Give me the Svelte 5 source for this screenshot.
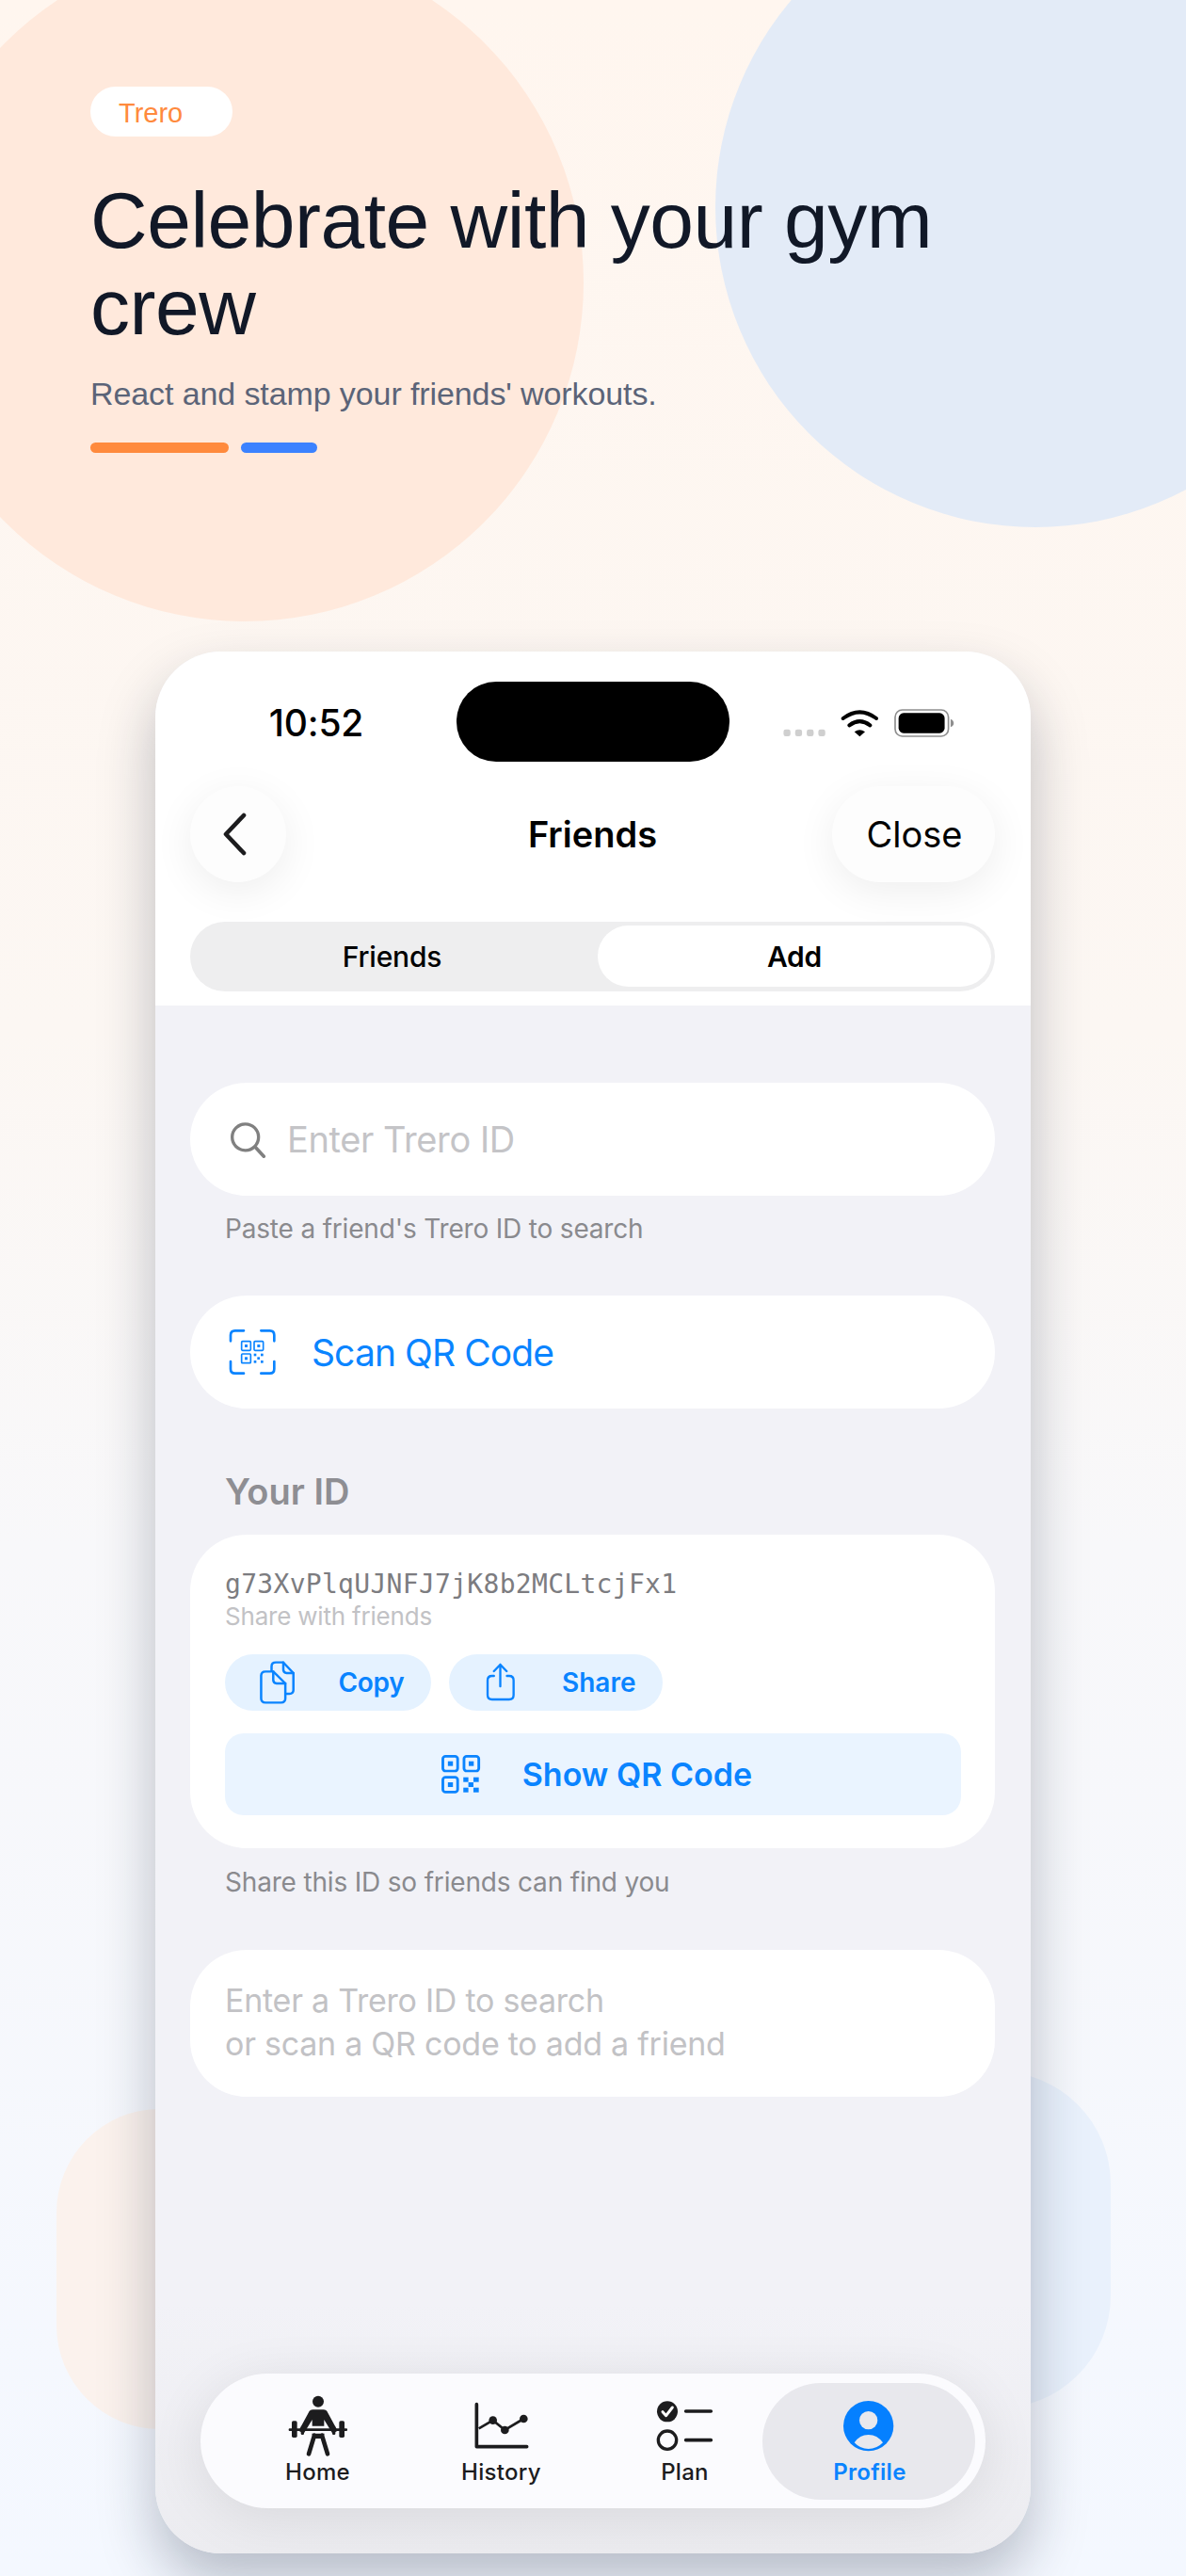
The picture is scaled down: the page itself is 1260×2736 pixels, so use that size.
<script>
  const tabs = ['Home', 'History', 'Plan', 'Profile'];
</script>

<div class="page">
  <div class="blob orange-circle"></div>
  <div class="blob blue-circle"></div>
  <div class="blob orange-box"></div>
  <div class="blob blue-box"></div>

  <section class="hero">
    <div class="badge">Trero</div>
    <h1>Celebrate with your gym crew</h1>
    <p>React and stamp your friends' workouts.</p>
    <div class="bars"><span class="bar-o"></span><span class="bar-b"></span></div>
  </section>

  <div class="phone">
    <header class="top">
      <div class="status">
        <div class="time">10:52</div>
        <div class="island"></div>
        <div class="sys">
          <svg class="sys-svg" viewBox="150 150 560 100" width="186.7" height="33.3" aria-hidden="true">
            <rect x="157" y="221" width="22" height="22" rx="7" fill="#cfcfcf"/>
            <rect x="194" y="221" width="22" height="22" rx="7" fill="#cfcfcf"/>
            <rect x="231" y="221" width="22" height="22" rx="7" fill="#cfcfcf"/>
            <rect x="268" y="221" width="22" height="22" rx="7" fill="#cfcfcf"/>
            <path d="M347 186 Q400 146 453 186" fill="none" stroke="#000" stroke-width="12" stroke-linecap="round"/>
            <path d="M367 208 Q400 183 433 208" fill="none" stroke="#000" stroke-width="12" stroke-linecap="round"/>
            <path d="M383 229 L400 244 L417 229 Q400 216 383 229Z" fill="#000"/>
            <rect x="513" y="159" width="170" height="84" rx="23" fill="none" stroke="#8e8e8e" stroke-width="5"/>
            <rect x="524" y="169" width="147" height="64" rx="16" fill="#000"/>
            <path d="M690 188 Q700 192 700 201 Q700 210 690 214Z" fill="#8e8e8e"/>
          </svg>
        </div>
      </div>
      <nav class="nav">
        <button class="round back" aria-label="Back">
          <svg viewBox="0 0 30 48" width="30" height="48" aria-hidden="true"><polyline points="25,4 6,24 25,44" fill="none" stroke="#1c1c1e" stroke-width="4.6" stroke-linecap="round" stroke-linejoin="round"/></svg>
        </button>
        <div class="title">Friends</div>
        <button class="round close">Close</button>
      </nav>
      <div class="seg">
        <div class="seg-item left">Friends</div>
        <div class="seg-item on">Add</div>
      </div>
    </header>

    <main class="content">
      <div class="pill-row">
        <svg class="search" viewBox="155 178 120 122" width="40" height="41" aria-hidden="true"><circle cx="208" cy="231" r="42" fill="none" stroke="#808080" stroke-width="10"/><line x1="240" y1="263" x2="267" y2="292" stroke="#808080" stroke-width="11" stroke-linecap="round"/></svg>
        <span class="placeholder">Enter Trero ID</span>
      </div>
      <div class="hint">Paste a friend's Trero ID to search</div>

      <div class="pill-row scan">
        <svg class="scan-ic" viewBox="155 845 150 150" width="50" height="50" aria-hidden="true">
          <g fill="none" stroke="#0a84ff" stroke-width="8" stroke-linecap="round">
            <path d="M161 885 V866 Q161 852 175 852 H203"/>
            <path d="M258 852 H286 Q300 852 300 866 V885"/>
            <path d="M161 950 V974 Q161 988 175 988 H203"/>
            <path d="M258 988 H286 Q300 988 300 974 V950"/>
            <g stroke-width="5">
              <rect x="196" y="886" width="29" height="29" rx="3"/>
              <rect x="236" y="886" width="29" height="29" rx="3"/>
              <rect x="196" y="926" width="29" height="29" rx="3"/>
            </g>
          </g>
          <g fill="#0a84ff">
            <rect x="206" y="896" width="9" height="9"/><rect x="246" y="896" width="9" height="9"/><rect x="206" y="936" width="9" height="9"/>
            <rect x="235" y="925" width="8" height="8"/><rect x="257" y="925" width="8" height="8"/><rect x="246" y="936" width="8" height="8"/><rect x="235" y="947" width="8" height="8"/><rect x="257" y="947" width="8" height="8"/>
          </g>
        </svg>
        <span class="scan-text">Scan QR Code</span>
      </div>

      <div class="your-id">Your ID</div>

      <section class="card">
        <div class="id">g73XvPlqUJNFJ7jK8b2MCLtcjFx1</div>
        <div class="share-note">Share with friends</div>
        <div class="actions">
          <button class="action copy">
            <svg viewBox="240 464 105 136" width="37.5" height="45.3" preserveAspectRatio="none" aria-hidden="true">
              <g fill="none" stroke="#0a84ff" stroke-width="7" stroke-linejoin="round" stroke-linecap="round">
                <path d="M275 495 V482 Q275 469 288 469 H310 L340 503 V557 Q340 569 328 569 H318"/>
                <path d="M310 469 V492 Q310 503 320 503 H340"/>
                <path d="M244 512 Q244 498 257 498 H280 L316 536 V584 Q316 597 303 597 H257 Q244 597 244 584Z"/>
                <path d="M280 498 V525 Q280 536 290 536 H316"/>
              </g>
            </svg>
            <span>Copy</span>
          </button>
          <button class="action share">
            <svg viewBox="910 475 95 125" width="32" height="41.7" preserveAspectRatio="none" aria-hidden="true">
              <g fill="none" stroke="#0a84ff" stroke-width="7" stroke-linejoin="round" stroke-linecap="round">
                <path d="M936 517 H930 Q916 517 916 531 V578 Q916 592 930 592 H984 Q998 592 998 578 V531 Q998 517 984 517 H977"/>
                <path d="M956 550 V481 M936 502 L956 481 L976 502"/>
              </g>
            </svg>
            <span>Share</span>
          </button>
        </div>
        <button class="show-qr">
          <svg viewBox="778 760 120 128" width="42.8" height="42.7" preserveAspectRatio="none" aria-hidden="true">
            <g fill="none" stroke="#0a84ff" stroke-width="8">
              <rect x="785" y="767" width="44" height="47" rx="8"/><rect x="848" y="767" width="44" height="47" rx="8"/><rect x="785" y="834" width="44" height="47" rx="8"/>
            </g>
            <g fill="#0a84ff">
              <rect x="800" y="783" width="15" height="15"/><rect x="862" y="783" width="15" height="15"/><rect x="800" y="850" width="15" height="15"/>
              <rect x="846" y="834" width="15" height="15"/><rect x="876" y="834" width="16" height="15"/><rect x="861" y="850" width="15" height="15"/><rect x="846" y="867" width="15" height="15"/><rect x="876" y="867" width="16" height="15"/>
            </g>
          </svg>
          <span>Show QR Code</span>
        </button>
      </section>

      <div class="hint after-card">Share this ID so friends can find you</div>

      <section class="empty">Enter a Trero ID to search<br />or scan a QR code to add a friend</section>
    </main>

    <footer class="tabbar">
      {#each tabs as t}
        <div class="tab" class:active={t === 'Profile'}>
          <div class="slot">
            {#if t === 'Home'}
              <svg viewBox="310 130 204 198" width="68" height="66" aria-hidden="true">
                <g fill="#1c1c1e">
                  <circle cx="412" cy="150" r="18"/>
                  <path d="M395 176 H429 Q438 176 443 186 L474 243 L458 252 L431 208 V228 H393 V208 L366 252 L350 243 L381 186 Q386 176 395 176Z"/>
                  <rect x="318" y="236" width="187" height="8" rx="3"/>
                  <rect x="328" y="212" width="17" height="53" rx="5"/>
                  <rect x="357" y="228" width="10" height="28" rx="4"/>
                  <rect x="457" y="228" width="10" height="28" rx="4"/>
                  <rect x="479" y="212" width="17" height="53" rx="5"/>
                </g>
                <path d="M400 258 L382 317 M424 258 L442 317" fill="none" stroke="#1c1c1e" stroke-width="14" stroke-linecap="round"/>
                <path d="M392 252 H432 L428 268 H396Z" fill="#1c1c1e"/>
              </svg>
            {:else if t === 'History'}
              <svg viewBox="905 150 185 160" width="61.7" height="53.3" aria-hidden="true">
                <path d="M918 161 V296 H1078" fill="none" stroke="#1c1c1e" stroke-width="11" stroke-linecap="round" stroke-linejoin="round"/>
                <path d="M925 238 L970 212 L1008 243 L1068 207" fill="none" stroke="#1c1c1e" stroke-width="8"/>
                <circle cx="970" cy="212" r="13" fill="#1c1c1e"/><circle cx="1008" cy="243" r="13" fill="#1c1c1e"/><circle cx="1068" cy="207" r="13" fill="#1c1c1e"/>
              </svg>
            {:else if t === 'Plan'}
              <svg viewBox="168 145 190 170" width="63.3" height="56.7" aria-hidden="true">
                <circle cx="207" cy="185" r="33" fill="#1c1c1e"/>
                <path d="M192 186 L203 198 L223 172" fill="none" stroke="#fff" stroke-width="9" stroke-linecap="round" stroke-linejoin="round"/>
                <circle cx="207" cy="276" r="29" fill="none" stroke="#1c1c1e" stroke-width="10"/>
                <path d="M266 184 H346 M266 276 H346" stroke="#1c1c1e" stroke-width="11" stroke-linecap="round"/>
              </svg>
            {:else}
              <svg viewBox="765 147 166 166" width="55.3" height="55.3" aria-hidden="true">
                <circle cx="848" cy="230" r="80" fill="#0580ff"/>
                <circle cx="848" cy="212" r="29" fill="#e8e8ed"/>
                <path d="M803 283 Q820 258 848 258 Q876 258 894 283 Q875 303 848 303 Q821 303 803 283Z" fill="#e8e8ed"/>
              </svg>
            {/if}
          </div>
          <div class="label">{t}</div>
        </div>
      {/each}
    </footer>
  </div>
</div>

<style>
  :global(body) { margin: 0; }
  .page {
    position: relative;
    width: 1260px;
    height: 2736px;
    overflow: hidden;
    background: linear-gradient(180deg, #fff6ef 0%, #fcf7f3 40%, #f8f8fa 60%, #f4f8ff 100%);
    font-family: Inter, "Liberation Sans", sans-serif;
  }
  .blob { position: absolute; }
  .orange-circle { left: -100px; top: -60px; width: 720px; height: 720px; border-radius: 50%; background: #ffe9dc; }
  .blue-circle { left: 760px; top: -120px; width: 680px; height: 680px; border-radius: 50%; background: #e3ebf7; }
  .orange-box { left: 60px; top: 2240px; width: 420px; height: 340px; border-radius: 110px; background: #fbf2ed; }
  .blue-box { left: 780px; top: 2200px; width: 400px; height: 358px; border-radius: 120px; background: #e9f1fc; }

  .hero { position: relative; height: 692px; box-sizing: border-box; padding: 92px 0 0 96px; font-family: "Liberation Sans", Arial, sans-serif; }
  .badge { width: 151px; height: 53px; box-sizing: border-box; padding-left: 30px; border-radius: 27px; background: #fff; color: #ff8a3d; font-size: 29px; line-height: 56px; }
  h1 { margin: 43px 0 0; width: 1000px; font-size: 84px; line-height: 92px; font-weight: 400; color: #111827; letter-spacing: -0.5px; }
  .hero p { margin: 26px 0 0; font-size: 34px; line-height: 40px; color: #5b6478; letter-spacing: -0.1px; }
  .bars { display: flex; gap: 13px; margin-top: 32px; }
  .bar-o { width: 147px; height: 11px; border-radius: 6px; background: #ff8a3d; }
  .bar-b { width: 81px; height: 11px; border-radius: 6px; background: #3b82ff; }

  .phone {
    position: relative;
    margin-left: 165px;
    width: 930px;
    height: 2020px;
    border-radius: 70px;
    overflow: clip;
    display: flex;
    flex-direction: column;
    background: #f2f2f7;
    box-shadow: 0 30px 60px rgba(20, 30, 50, 0.27);
  }

  .top { background: #fff; padding-bottom: 15px; }
  .status { display: flex; height: 143px; align-items: flex-start; }
  .time { width: 320px; box-sizing: border-box; padding: 54px 0 0 22px; text-align: center; font-size: 39px; line-height: 44px; font-weight: 500; color: #000; letter-spacing: -0.2px; }
  .island { margin-top: 32px; width: 290px; height: 85px; border-radius: 42px; background: #000; }
  .sys { margin: 59px 0 0 55px; line-height: 0; }
  .sys-svg { display: block; }

  .nav { display: grid; grid-template-columns: 1fr auto 1fr; align-items: center; padding: 0 38px 0 37px; height: 102px; }
  .round { border: 0; height: 102px; border-radius: 51px; background: #fdfdfd; box-shadow: 0 10px 44px rgba(0, 0, 0, 0.07); font-family: inherit; padding: 0; display: flex; align-items: center; justify-content: center; }
  .back { width: 102px; justify-self: start; padding-right: 9px; }
  .close { width: 173px; justify-self: end; font-size: 38px; color: #000; padding-left: 2px; }
  .title { font-size: 38px; font-weight: 600; color: #000; }

  .seg { margin: 42px 38px 0 37px; height: 74px; box-sizing: border-box; padding: 4px; border-radius: 37px; background: #eeeeef; display: grid; grid-template-columns: 429px 418px; }
  .seg-item { display: flex; align-items: center; justify-content: center; font-size: 30px; font-weight: 500; color: #000; height: 65px; letter-spacing: -0.2px; }
  .seg-item.left { padding-right: 8px; }
  .seg-item.on { background: #fff; border-radius: 33px; font-weight: 600; }

  .content { flex: 1; box-sizing: border-box; padding: 82px 38px 0 37px; background: linear-gradient(180deg, #f2f2f7 0, #f2f2f7 1380px, #ececf0 100%); }
  .pill-row { height: 120px; border-radius: 60px; background: #fff; display: flex; align-items: center; box-sizing: border-box; padding-left: 41px; }
  .search { flex: none; }
  .placeholder { margin-left: 22px; font-size: 38px; color: #c4c4c7; letter-spacing: -0.4px; }
  .hint { margin-top: 20px; padding-left: 37px; font-size: 28px; line-height: 30px; color: #8a8a8e; letter-spacing: -0.18px; }
  .scan { margin-top: 56px; }
  .scan-ic { flex: none; }
  .scan-text { margin-left: 38px; font-size: 39px; color: #0a84ff; letter-spacing: -0.9px; }
  .your-id { margin-top: 66px; padding-left: 37px; font-size: 38px; line-height: 44px; font-weight: 600; color: #8e8e93; }

  .card { margin-top: 24px; height: 333px; box-sizing: border-box; padding: 35px 36px 35px 37px; border-radius: 60px; background: #fff; }
  .id { font-family: "DejaVu Sans Mono", "Liberation Mono", monospace; font-size: 28px; line-height: 36px; color: #7c7c80; letter-spacing: 0.3px; }
  .share-note { margin-top: 1px; font-size: 26px; line-height: 30px; color: #c2c2c5; letter-spacing: -0.2px; }
  .actions { display: flex; gap: 19px; margin-top: 25px; }
  .action { border: 0; height: 60px; border-radius: 30px; background: #e5f2ff; color: #0a84ff; font-family: inherit; font-size: 28px; font-weight: 600; display: flex; align-items: center; box-sizing: border-box; }
  .copy { width: 219px; padding: 0 0 0 37px; letter-spacing: -0.3px; }
  .copy span { margin-left: 46px; }
  .share { width: 227px; padding: 0 0 0 39px; }
  .share span { margin-left: 49px; }
  .show-qr { margin-top: 24px; width: 782px; height: 87px; border: 0; border-radius: 20px; background: #eaf4ff; color: #0a84ff; font-family: inherit; font-size: 34px; font-weight: 600; display: flex; align-items: center; justify-content: center; gap: 44px; padding-left: 13px; }

  .after-card { margin-top: 21px; }
  .empty { margin-top: 57px; height: 156px; box-sizing: border-box; padding: 31px 0 0 37px; border-radius: 60px; background: #fff; font-size: 34px; line-height: 46px; color: #c2c2c5; letter-spacing: -0.25px; }

  .tabbar { position: absolute; left: 48px; bottom: 48px; width: 834px; height: 143px; box-sizing: border-box; padding: 22px 0 0 27px; border-radius: 72px; background: #fbfbfe; box-shadow: 0 10px 60px rgba(0, 0, 0, 0.09); display: flex; }
  .tab { position: relative; width: 195px; text-align: center; }
  .tab.active::before { content: ""; position: absolute; left: -15px; right: -16px; top: -12px; height: 124px; border-radius: 62px; background: #e8e8ed; }
  .slot { position: relative; height: 67px; display: flex; align-items: center; justify-content: center; }
  .label { position: relative; font-size: 24px; line-height: 32px; font-weight: 500; color: #1c1c1e; letter-spacing: 0.3px; }
  .active .label { color: #0a84ff; font-weight: 600; padding-left: 3px; }
</style>
